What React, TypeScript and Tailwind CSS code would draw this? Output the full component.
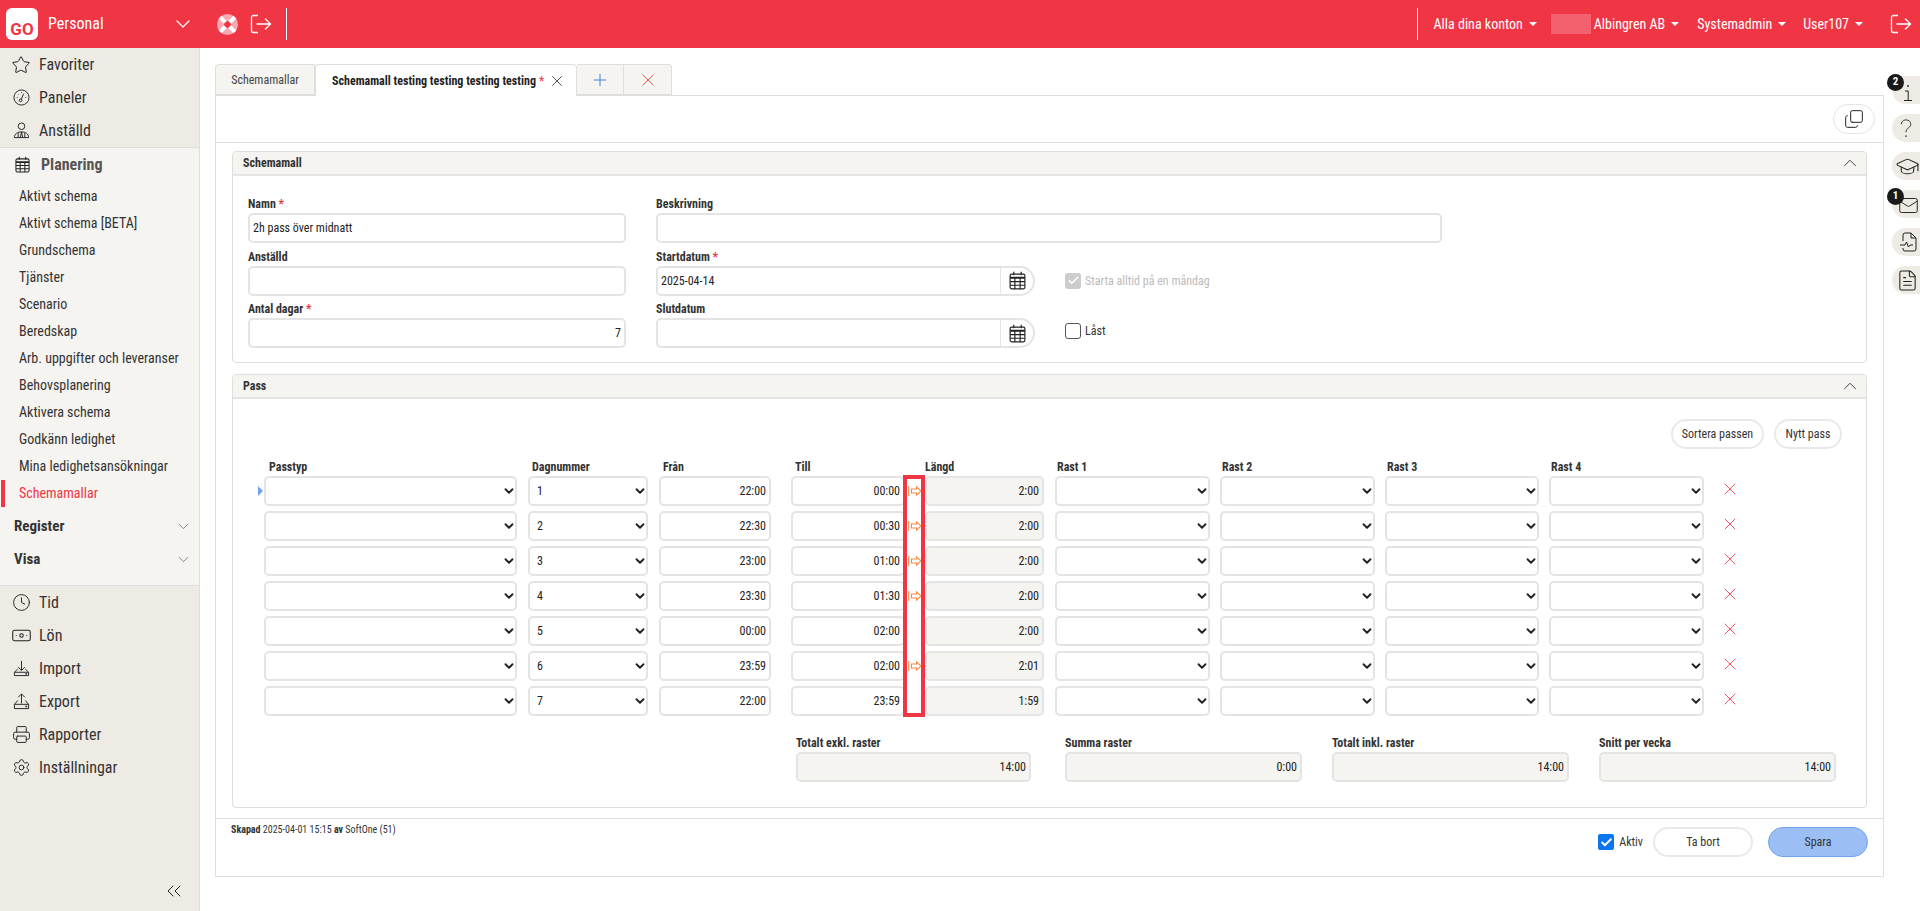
import React from "react";
import { Star, Clock, Banknote, Printer, Settings, ChevronDown, ChevronUp, ChevronsLeft, Copy, X, Plus, GraduationCap, Mail, FileText, Check } from "lucide-react";

const subItems = [
  "Aktivt schema",
  "Aktivt schema [BETA]",
  "Grundschema",
  "Tjänster",
  "Scenario",
  "Beredskap",
  "Arb. uppgifter och leveranser",
  "Behovsplanering",
  "Aktivera schema",
  "Godkänn ledighet",
  "Mina ledighetsansökningar",
];

const rows = [
  { day: "1", from: "22:00", to: "00:00", len: "2:00", next: true },
  { day: "2", from: "22:30", to: "00:30", len: "2:00", next: true },
  { day: "3", from: "23:00", to: "01:00", len: "2:00", next: true },
  { day: "4", from: "23:30", to: "01:30", len: "2:00", next: true },
  { day: "5", from: "00:00", to: "02:00", len: "2:00", next: false },
  { day: "6", from: "23:59", to: "02:00", len: "2:01", next: true },
  { day: "7", from: "22:00", to: "23:59", len: "1:59", next: false },
];

const Caret = () => <span className="ml-[6px] inline-block border-x-[4px] border-t-[4px] border-x-transparent border-t-white" />;

const ExitIcon = ({ className }: { className: string }) => (
  <svg viewBox="0 0 22 20" fill="none" stroke="white" strokeWidth="1.3" className={className}>
    <path d="M8 1.5H3.5a2 2 0 0 0-2 2v13a2 2 0 0 0 2 2H8" />
    <path d="M6.5 10h14M15 4.5l5.5 5.5-5.5 5.5" />
  </svg>
);

const Req = () => <span className="text-[#f03545]">*</span>;

const Label = ({ children }: { children: React.ReactNode }) => (
  <label className="block h-[17px] text-[12px] leading-[16px] font-bold text-[#333]">{children}</label>
);

const Field = ({ value = "", right, muted, className = "" }: { value?: string; right?: boolean; muted?: boolean; className?: string }) => (
  <input
    readOnly
    value={value}
    className={`h-[30px] rounded-[5px] border-2 border-[#e4e4e4] px-[3px] text-[12px] font-stretch-condensed text-[#222] outline-none ${right ? "text-right" : ""} ${muted ? "bg-[#f5f4f0]" : "bg-white"} ${className}`}
  />
);

const SelectBox = ({ value, className }: { value?: string; className: string }) => (
  <div className={`relative h-[30px] ${className}`}>
    <select className="h-full w-full appearance-none rounded-[5px] border-2 border-[#e4e4e4] bg-white pl-[7px] text-[12px] font-stretch-condensed text-[#222] outline-none" defaultValue={value}>
      <option value={value}>{value}</option>
    </select>
    <ChevronDown size={14} strokeWidth={3.2} className="absolute right-[1px] top-[8px] text-[#222]" />
  </div>
);

const CalendarIcon = ({ className }: { className: string }) => (
  <svg viewBox="0 0 16 18" fill="none" stroke="#222" strokeWidth="1.1" className={className}>
    <rect x="1" y="3" width="14" height="14" rx="1.5" />
    <path d="M1 6h14M1 6.9h14M1 10h14M1 13.5h14M5.5 6v11M10.5 6v11" />
    <path d="M4.5 1v2.5M11.5 1v2.5" strokeLinecap="round" />
  </svg>
);

const DateField = ({ value = "" }: { value?: string }) => (
  <div className="flex h-[30px] w-[379px] rounded-l-[5px] rounded-r-[15px] border-2 border-[#e4e4e4] bg-white">
    <input readOnly value={value} className="min-w-0 flex-1 px-[3px] text-[12px] font-stretch-condensed text-[#222] outline-none" />
    <div className="flex w-[33px] items-center justify-center border-l border-[#e4e4e4]">
      <CalendarIcon className="h-[19px] w-[17px]" />
    </div>
  </div>
);

const PanelHead = ({ title }: { title: string }) => (
  <div className="flex h-[24px] items-center justify-between rounded-t-[4px] border-b-2 border-[#e4e4e4] bg-[#f5f4f0] pl-[10px] pr-[5px]">
    <span className="text-[12px] font-bold text-[#333]">{title}</span>
    <ChevronUp size={22} strokeWidth={1} className="text-[#333]" />
  </div>
);

const NavItem = ({ icon, label }: { icon: React.ReactNode; label: string }) => (
  <div className="flex h-[33px] items-center">
    <span className="flex w-[39px] justify-center pl-[3px]">{icon}</span>
    <span className="text-[16px] text-[#333]">{label}</span>
  </div>
);

const RailButton = ({ children, badge }: { children: React.ReactNode; badge?: string }) => (
  <div className="relative flex h-[28px] w-[28px] items-center justify-center rounded-l-[14px] bg-[#eeeae4]">
    {children}
    {badge && (
      <span className="absolute -left-[5px] -top-[2px] flex h-[17px] w-[17px] items-center justify-center rounded-full bg-[#1a1a1a] text-[11px] font-bold text-white">{badge}</span>
    )}
  </div>
);

export default function App() {
  return (
    <div className="flex h-screen flex-col overflow-hidden bg-white font-[Roboto,sans-serif] font-stretch-condensed text-[#222]">
      {/* Top bar */}
      <header className="flex h-12 shrink-0 items-center bg-[#f03545] text-white">
        <div className="ml-[6px] flex h-8 w-8 items-end justify-center rounded-[6px] bg-white pb-[2px] text-[17px] leading-[17px] font-bold font-stretch-normal text-[#f03545]">GO</div>
        <span className="ml-[10px] w-[123px] text-[16px]">Personal</span>
        <ChevronDown size={24} strokeWidth={1.2} />
        <svg viewBox="0 0 20 20" className="ml-[22px] h-[21px] w-[21px]">
          <circle cx="10" cy="10" r="10" fill="#f8a9b1" />
          <circle cx="10" cy="10" r="3.4" fill="#f03545" />
          <path d="M3 3l5 5M17 3l-5 5M3 17l5-5M17 17l-5-5" stroke="white" strokeWidth="3.8" />
        </svg>
        <ExitIcon className="ml-[12px] h-[20px] w-[22px]" />
        <div className="ml-[14px] h-8 w-px bg-white" />
        <div className="flex-1" />
        <div className="h-8 w-px bg-white" />
        <span className="ml-[16px] flex items-center text-[14px]">Alla dina konton<Caret /></span>
        <span className="ml-[14px] h-[20px] w-[40px] bg-[#f3606e]" />
        <span className="ml-[3px] flex items-center text-[14px]">Albingren AB<Caret /></span>
        <span className="ml-[18px] flex items-center text-[14px]">Systemadmin<Caret /></span>
        <span className="ml-[17px] flex items-center text-[14px]">User107<Caret /></span>
        <ExitIcon className="ml-[27px] mr-[8px] h-[20px] w-[22px]" />
      </header>

      <div className="flex min-h-0 flex-1">
        {/* Sidebar */}
        <aside className="flex w-[200px] shrink-0 flex-col border-r border-[#dedede] bg-[#eeeae4]">
          <NavItem icon={<Star size={20} strokeWidth={1.2} />} label="Favoriter" />
          <NavItem
            icon={
              <svg viewBox="0 0 18 18" fill="none" stroke="#222" strokeWidth="1" className="h-[17px] w-[17px]">
                <circle cx="9" cy="9" r="8" />
                <circle cx="8" cy="12" r="1.4" />
                <path d="M8.8 11l2.4-6M4 9h.8M5.5 5.5l.5.5M9 3.5v.8M14 9h-.8" />
              </svg>
            }
            label="Paneler"
          />
          <NavItem
            icon={
              <svg viewBox="0 0 18 18" fill="none" stroke="#222" strokeWidth="1" className="h-[17px] w-[17px]">
                <circle cx="9" cy="4.5" r="3.5" />
                <path d="M1.5 16.5c0-4 3-6 7.5-6s7.5 2 7.5 6zM9 10.5l-1.2 6M9 10.5l1.2 6M5.5 11.5v5M12.5 11.5v5" />
              </svg>
            }
            label="Anställd"
          />

          <section className="border-y border-[#dedede] bg-[#f5f4f0] pb-[9px] pl-px">
            <div className="mb-[2px] flex h-[33px] items-center pl-[14px]">
              <CalendarIcon className="h-[17px] w-[15px]" />
              <span className="ml-[11px] text-[16px] font-bold text-[#555]">Planering</span>
            </div>
            {subItems.map((s) => (
              <div key={s} className="flex h-[27px] items-center pl-[18px] text-[14px] text-[#333]">{s}</div>
            ))}
            <div className="flex h-[27px] items-center border-l-4 border-[#f03545] pl-[14px] text-[14px] text-[#f03545]">Schemamallar</div>
            <div className="mt-[3px] flex h-[33px] items-center justify-between pl-[13px] pr-[7px] text-[15px] font-bold text-[#333]">
              Register
              <ChevronDown size={17} strokeWidth={1} className="text-[#555]" />
            </div>
            <div className="flex h-[33px] items-center justify-between pl-[13px] pr-[7px] text-[15px] font-bold text-[#333]">
              Visa
              <ChevronDown size={17} strokeWidth={1} className="text-[#555]" />
            </div>
          </section>

          <NavItem icon={<Clock size={19} strokeWidth={1.2} />} label="Tid" />
          <NavItem icon={<Banknote size={21} strokeWidth={1.2} />} label="Lön" />
          <NavItem
            icon={
              <svg viewBox="0 0 18 18" fill="none" stroke="#222" strokeWidth="1" className="h-[17px] w-[17px]">
                <path d="M9 1v10M5.5 7.5L9 11l3.5-3.5M5 9.5L1.5 13v3.5h15V13L13 9.5M1.5 13h15" />
                <circle cx="14" cy="14.7" r=".6" />
              </svg>
            }
            label="Import"
          />
          <NavItem
            icon={
              <svg viewBox="0 0 18 18" fill="none" stroke="#222" strokeWidth="1" className="h-[17px] w-[17px]">
                <path d="M9 11V1M5.5 4.5L9 1l3.5 3.5M5 8L1.5 12v4.5h15V12L13 8M1.5 12h15" />
                <circle cx="14" cy="14.2" r=".6" />
              </svg>
            }
            label="Export"
          />
          <NavItem icon={<Printer size={19} strokeWidth={1.2} />} label="Rapporter" />
          <NavItem icon={<Settings size={19} strokeWidth={1.2} />} label="Inställningar" />
          <div className="mt-auto flex justify-end pb-[8px] pr-[13px]">
            <ChevronsLeft size={24} strokeWidth={1} />
          </div>
        </aside>

        {/* Main */}
        <main className="relative min-w-0 flex-1 pl-[15px] pr-[8px] pt-4">
          <div className="flex h-[31px] text-[12px]">
            <div className="flex w-[100px] items-center justify-center rounded-tl-[4px] border border-[#dedede] bg-[#f5f4f0] text-[#444]">Schemamallar</div>
            <div className="z-10 flex h-[32px] w-[262px] items-center whitespace-nowrap rounded-t-[4px] border-x border-t border-[#dedede] bg-white pl-[16px]">
              <span className="font-bold text-[#222]">Schemamall testing testing testing testing</span>
              <span className="ml-[3px] text-[#f03545]">*</span>
              <X size={18} strokeWidth={1} className="ml-[4px]" />
            </div>
            <div className="flex w-[47px] items-center justify-center border-y border-r border-[#dedede] bg-[#f5f4f0]">
              <Plus size={20} strokeWidth={1} className="text-[#1976d2]" />
            </div>
            <div className="flex w-[48px] items-center justify-center rounded-tr-[4px] border-y border-r border-[#dedede] bg-[#f5f4f0]">
              <X size={20} strokeWidth={1} className="text-[#f03545]" />
            </div>
          </div>

          <div className="h-[782px] border border-[#dedede]">
            <div className="flex h-[47px] items-center justify-end border-b border-[#dedede] pr-[8px]">
              <button className="flex h-[30px] w-[42px] items-center justify-center rounded-[15px] border border-[#e4e4e4]">
                <Copy size={20} strokeWidth={1.2} className="-scale-y-100" />
              </button>
            </div>

            <div className="px-[16px] pt-[8px]">
              {/* Schemamall */}
              <div className="h-[212px] rounded-[4px] border border-[#dedede]">
                <PanelHead title="Schemamall" />
                <div className="grid grid-cols-[378px_379px_377px] gap-x-[30px] pl-[15px] pt-[20px]">
                  <div className="mb-[5.5px]">
                    <Label>Namn <Req /></Label>
                    <Field value="2h pass över midnatt" className="w-full" />
                  </div>
                  <div className="col-span-2 mb-[5.5px]">
                    <Label>Beskrivning</Label>
                    <Field className="w-full" />
                  </div>
                  <div className="mb-[5.5px]">
                    <Label>Anställd</Label>
                    <Field className="w-full" />
                  </div>
                  <div className="mb-[5.5px]">
                    <Label>Startdatum <Req /></Label>
                    <DateField value="2025-04-14" />
                  </div>
                  <div className="flex items-center gap-[4px] pt-[12px] text-[12px] text-[#bbb]">
                    <span className="flex h-4 w-4 items-center justify-center rounded-[3px] bg-[#ccc]">
                      <Check size={13} strokeWidth={3} className="text-white" />
                    </span>
                    Starta alltid på en måndag
                  </div>
                  <div>
                    <Label>Antal dagar <Req /></Label>
                    <Field value="7" right className="w-full" />
                  </div>
                  <div>
                    <Label>Slutdatum</Label>
                    <DateField />
                  </div>
                  <div className="flex items-center gap-[4px] pt-[12px] text-[12px] text-[#333]">
                    <span className="h-4 w-4 rounded-[3px] border border-[#555]" />
                    Låst
                  </div>
                </div>
              </div>

              {/* Pass */}
              <div className="mt-[11px] h-[434px] rounded-[4px] border border-[#dedede]">
                <PanelHead title="Pass" />
                <div className="relative">
                  <div className="flex justify-end gap-[10px] pr-[24px] pt-[20px]">
                    <button className="h-[30px] w-[93px] rounded-[15px] border-2 border-[#e9e9e9] text-[12px] text-[#333]">Sortera passen</button>
                    <button className="h-[30px] w-[68px] rounded-[15px] border-2 border-[#e9e9e9] text-[12px] text-[#333]">Nytt pass</button>
                  </div>

                  <div className="mt-[10px] flex h-[17px] pl-[31px] text-[12px] leading-[16px] font-bold text-[#333]">
                    <span className="w-[264px] pl-[5px]">Passtyp</span>
                    <span className="w-[131px] pl-[4px]">Dagnummer</span>
                    <span className="w-[132px] pl-[4px]">Från</span>
                    <span className="w-[134px] pl-[4px]">Till</span>
                    <span className="w-[130px]">Längd</span>
                    <span className="w-[165px] pl-[2px]">Rast 1</span>
                    <span className="w-[165px] pl-[2px]">Rast 2</span>
                    <span className="w-[164px] pl-[2px]">Rast 3</span>
                    <span className="pl-[2px]">Rast 4</span>
                  </div>

                  <div className="flex flex-col gap-[5px]">
                    {rows.map((r, i) => (
                      <div key={r.day} className="flex h-[30px] items-center">
                        <div className="flex w-[31px] justify-end pr-px">
                          {i === 0 && <span className="border-y-[5px] border-l-[5px] border-y-transparent border-l-[#6fa3ef]" />}
                        </div>
                        <SelectBox className="w-[253px]" />
                        <SelectBox value={r.day} className="ml-[11px] w-[120px]" />
                        <Field value={r.from} right className="ml-[11px] w-[112px]" />
                        <Field value={r.to} right className="ml-[20px] w-[114px]" />
                        <div className="flex w-[20px] justify-center">
                          {r.next && (
                            <svg viewBox="0 0 14 10" fill="none" stroke="#f58a45" strokeWidth="1.1" className="h-[10px] w-[14px]">
                              <path d="M.7 0v10" />
                              <path d="M3.5 3h5V.8L13 5 8.500 9.200V7h-5z" />
                            </svg>
                          )}
                        </div>
                        <Field value={r.len} right muted className="w-[119px]" />
                        <SelectBox className="ml-[11px] w-[155px]" />
                        <SelectBox className="ml-[10px] w-[155px]" />
                        <SelectBox className="ml-[10px] w-[154px]" />
                        <SelectBox className="ml-[10px] w-[155px]" />
                        <X size={20} strokeWidth={1} className="ml-[16px] -mt-[4px] text-[#f03545]" />
                      </div>
                    ))}
                  </div>

                  {/* Red marker over the arrows column */}
                  <div className="absolute left-[670px] top-[76px] h-[242px] w-[22px] border-4 border-[#f03545]" />

                  <div className="mt-[19px] flex justify-end gap-[30px] pr-[30px]">
                    <div className="mr-[4px] w-[235px]">
                      <Label>Totalt exkl. raster</Label>
                      <Field value="14:00" right muted className="w-full" />
                    </div>
                    <div className="w-[237px]">
                      <Label>Summa raster</Label>
                      <Field value="0:00" right muted className="w-full" />
                    </div>
                    <div className="w-[237px]">
                      <Label>Totalt inkl. raster</Label>
                      <Field value="14:00" right muted className="w-full" />
                    </div>
                    <div className="w-[237px]">
                      <Label>Snitt per vecka</Label>
                      <Field value="14:00" right muted className="w-full" />
                    </div>
                  </div>
                </div>
              </div>
            </div>

            {/* Footer */}
            <div className="mt-[10px] flex h-[58px] justify-between border-t border-[#dedede] pl-[15px] pr-[15px] pt-[8px]">
              <div className="-mt-[4px] text-[10px] leading-[14px] text-[#333]">
                <b>Skapad</b> 2025-04-01 15:15 <b>av</b> SoftOne (51)
              </div>
              <div className="flex h-[30px] items-center">
                <span className="flex h-4 w-4 items-center justify-center rounded-[2px] bg-[#0b76ef]">
                  <Check size={13} strokeWidth={3.5} className="text-white" />
                </span>
                <span className="ml-[5px] text-[12px] text-[#333]">Aktiv</span>
                <button className="ml-[10px] h-[30px] w-[100px] rounded-[15px] border-2 border-[#e9e9e9] text-[12px] text-[#333]">Ta bort</button>
                <button className="ml-[15px] h-[30px] w-[100px] rounded-[15px] border border-[#6fa3ef] bg-[#9bbff5] text-[12px] text-[#333]">Spara</button>
              </div>
            </div>
          </div>
        </main>

        {/* Right rail */}
        <div className="flex w-[28px] shrink-0 flex-col gap-[10px] pt-[28px]">
          <RailButton badge="2">
            <svg viewBox="0 0 10 18" fill="none" stroke="#222" strokeWidth="1" className="ml-[4px] mt-[5px] h-[18px] w-[10px]">
              <circle cx="5" cy="2" r=".6" />
              <path d="M2 7h3.2v9M1 16.500h8" />
            </svg>
          </RailButton>
          <RailButton>
            <svg viewBox="0 0 12 20" fill="none" stroke="#333" strokeWidth="1" className="h-[19px] w-[12px]">
              <path d="M1 5.500a5 4.500 0 1 1 8 3.500c-2 1.500-3 2.500-3 5" />
              <circle cx="6" cy="18" r=".5" />
            </svg>
          </RailButton>
          <RailButton><GraduationCap size={25} strokeWidth={1} className="ml-[3px]" /></RailButton>
          <RailButton badge="1"><Mail size={21} strokeWidth={1.1} className="ml-[5px] mt-[3px]" /></RailButton>
          <RailButton>
            <svg viewBox="0 0 18 20" fill="none" stroke="#222" strokeWidth="1" className="ml-[3px] h-[20px] w-[18px]">
              <path d="M4 9V3a2 2 0 0 1 2-2h6l5 5v11a2 2 0 0 1-2 2H6a2 2 0 0 1-2-2v-1" />
              <path d="M12 1v5h5M1 13h5l1.500-3 2 5 1.500-2h3" />
            </svg>
          </RailButton>
          <RailButton><FileText size={23} strokeWidth={1.1} className="ml-[3px]" /></RailButton>
        </div>
      </div>
    </div>
  );
}
